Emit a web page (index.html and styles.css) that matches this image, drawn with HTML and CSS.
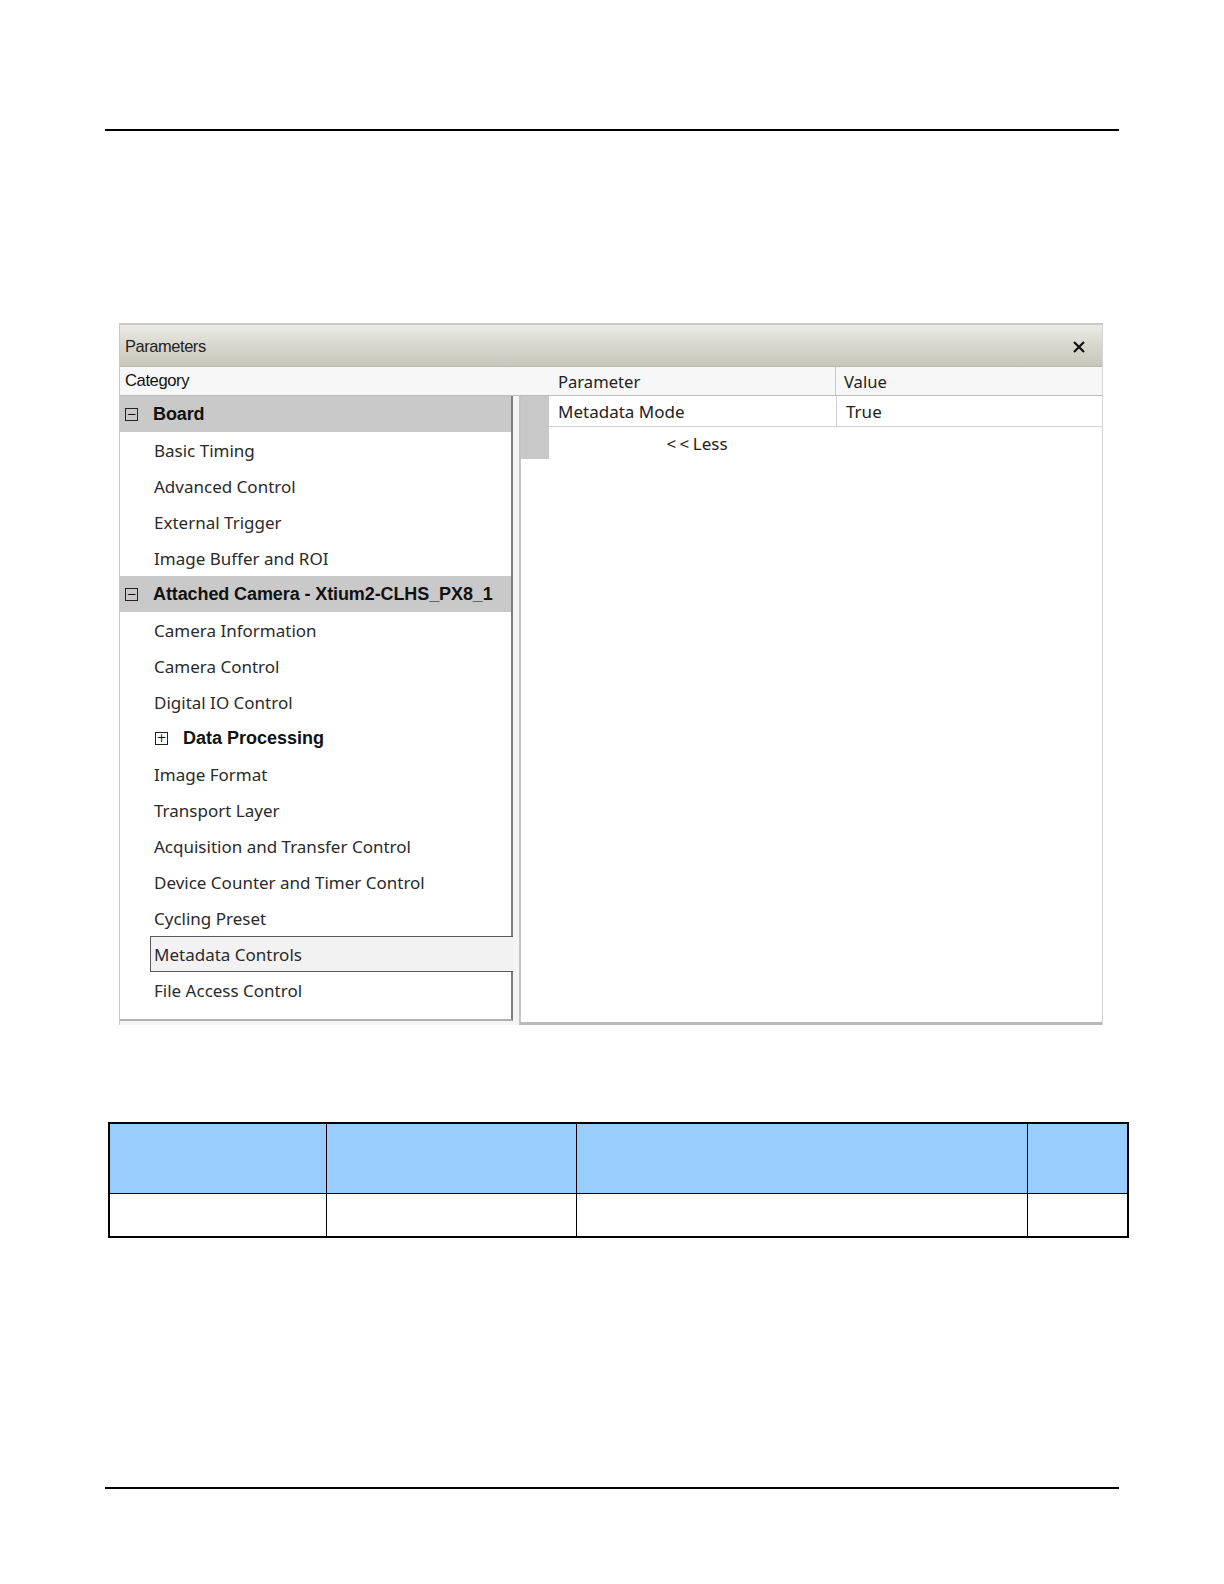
FILE: index.html
```html
<!DOCTYPE html>
<html lang="en">
<head>
  <meta charset="UTF-8" />
  <title>Parameters - Metadata Controls</title>
  <link rel="stylesheet" href="styles.css">
</head>
<body>
  <div class="rule rule-top"></div>

  <!-- Parameters window capture -->
  <div class="panel">
    <div class="titlebar">
      <span>Parameters</span>
      <svg class="close" width="14" height="14" viewBox="0 0 14 14">
        <path d="M2 2 L12 12 M12 2 L2 12" stroke="#111" stroke-width="2.2" fill="none" />
      </svg>
    </div>
    <div class="heads">
      <div class="head-cat">Category</div>
      <div class="head-param">Parameter</div>
      <div class="head-value">Value</div>
    </div>
    <div class="panes">
      <div class="tree">
        <div class="row group"><span class="box">&minus;</span>Board</div>
        <div class="row item">Basic Timing</div>
        <div class="row item">Advanced Control</div>
        <div class="row item">External Trigger</div>
        <div class="row item">Image Buffer and ROI</div>
        <div class="row group"><span class="box">&minus;</span>Attached Camera - Xtium2-CLHS_PX8_1</div>
        <div class="row item">Camera Information</div>
        <div class="row item">Camera Control</div>
        <div class="row item">Digital IO Control</div>
        <div class="row sub"><span class="box">+</span>Data Processing</div>
        <div class="row item">Image Format</div>
        <div class="row item">Transport Layer</div>
        <div class="row item">Acquisition and Transfer Control</div>
        <div class="row item">Device Counter and Timer Control</div>
        <div class="row item">Cycling Preset</div>
        <div class="row item selected">Metadata Controls</div>
        <div class="row item">File Access Control</div>
      </div>
      <div class="grid">
        <div class="grid-body">
          <div class="gutter"></div>
          <div class="cells">
            <div class="param-row">
              <div class="cell-param">Metadata Mode</div>
              <div class="cell-value">True</div>
            </div>
            <div class="less">&lt; &lt; Less</div>
          </div>
        </div>
      </div>
    </div>
  </div>

  <table class="blank">
    <tr class="head">
      <td class="c1"></td><td class="c2"></td><td class="c3"></td><td class="c4"></td>
    </tr>
    <tr class="body-row">
      <td></td><td></td><td></td><td></td>
    </tr>
  </table>

  <div class="rule rule-bottom"></div>
</body>
</html>
```

FILE: styles.css
```css
body {
  margin: 0;
  background: #fff;
  font-family: 'Noto Sans', 'Open Sans', sans-serif;
  color: #222;
}

.rule {
  width: 1014px;
  height: 2px;
  background: #000;
  margin-left: 105px;
}

.rule-top {
  margin-top: 129px;
}

.rule-bottom {
  margin-top: 249px;
}

/* screenshot of the parameters window */
.panel {
  margin: 192px 0 0 119px;
  width: 982px;
  border-top: 2px solid #c9c9c9;
  border-left: 1px solid #c9c9c9;
  border-right: 1px solid #d6d6d6;
  background: #f4f4f4;
}

.titlebar {
  height: 39px;
  display: flex;
  align-items: center;
  justify-content: space-between;
  padding: 2px 16px 0 5px;
  background: linear-gradient(#ecebe6, #d6d4cb 55%, #c9c6bc);
  border-bottom: 1px solid #b9b7ae;
  font-family: 'Liberation Sans', Arial, sans-serif;
  font-size: 16.4px;
  letter-spacing: -0.4px;
  color: #222;
}

.heads {
  height: 28px;
  display: flex;
  align-items: center;
  background: #f7f7f7;
  border-bottom: 1px solid #bcbcbc;
  font-size: 16.6px;
}

.head-cat {
  width: 433px;
  padding-left: 5px;
  font-family: 'Liberation Sans', Arial, sans-serif;
  font-size: 16.6px;
  letter-spacing: -0.4px;
  color: #111;
}

.head-param {
  width: 277px;
  height: 100%;
  display: flex;
  align-items: center;
  border-right: 1px solid #c8c8c8;
}

.head-value {
  padding-left: 8px;
}

.panes {
  display: flex;
  gap: 6px;
}

.tree {
  width: 391px;
  height: 623px;
  background: #fff;
  border-right: 2px solid #7d7d7d;
  border-bottom: 2px solid #b0b0b0;
}

.row {
  height: 36px;
  display: flex;
  align-items: center;
  font-size: 17px;
  color: #2a2a2a;
  white-space: nowrap;
}

.item {
  padding-left: 34px;
}

.group {
  background: #c9c9c9;
  padding-left: 5px;
  font-family: 'Liberation Sans', Arial, sans-serif;
  font-weight: bold;
  font-size: 18px;
  letter-spacing: -0.1px;
  color: #111;
}

.sub {
  padding-left: 35px;
  font-family: 'Liberation Sans', Arial, sans-serif;
  font-weight: bold;
  font-size: 18px;
  color: #111;
}

.box {
  width: 11px;
  height: 11px;
  border: 1px solid #222;
  display: inline-flex;
  align-items: center;
  justify-content: center;
  font-family: 'DejaVu Sans', sans-serif;
  font-weight: normal;
  font-size: 12px;
  line-height: 1;
  margin-right: 15px;
  letter-spacing: 0;
}

.selected {
  margin-left: 30px;
  margin-right: -2px;
  padding-left: 3px;
  background: #f2f2f2;
  border: 1px solid #5a5a5a;
  border-right: none;
  height: 34px;
}

.grid {
  flex: 1;
  height: 626px;
  background: #fff;
  border-left: 2px solid #c4c4c4;
  border-bottom: 3px solid #b8b8b8;
}

.grid-body {
  display: flex;
}

.gutter {
  width: 28px;
  height: 63px;
  background: #c8c8c8;
}

.cells {
  flex: 1;
}

.param-row {
  height: 30px;
  display: flex;
  border-bottom: 1px solid #d4d4d4;
  font-size: 17px;
}

.cell-param {
  width: 278px;
  padding-left: 9px;
  display: flex;
  align-items: center;
  border-right: 1px solid #d0d0d0;
}

.cell-value {
  padding-left: 9px;
  display: flex;
  align-items: center;
}

.less {
  width: 296px;
  text-align: center;
  padding-top: 5px;
  font-size: 17px;
  word-spacing: -1px;
}

/* empty table below the capture */
.blank {
  margin: 97px 0 0 108px;
  width: 1021px;
  table-layout: fixed;
  border-collapse: collapse;
  border: 2px solid #000;
}

.blank td {
  border: 1px solid #000;
  padding: 0;
}

.blank .head td {
  height: 69px;
  background: #99ccff;
}

.blank .body-row td {
  height: 42px;
}

.c1 { width: 216px; }
.c2 { width: 249px; }
.c3 { width: 450px; }
```
